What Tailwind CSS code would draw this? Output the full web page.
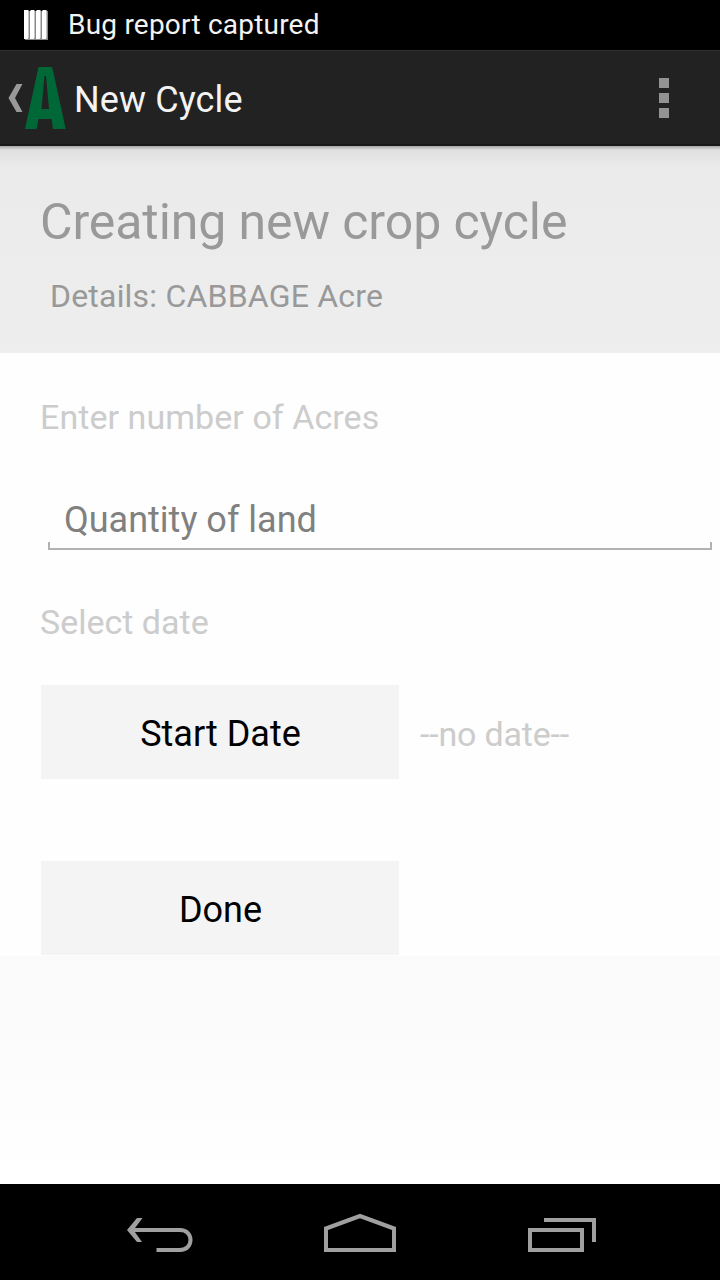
<!DOCTYPE html>
<html lang="en">
<head>
<meta charset="utf-8">
<title>New Cycle</title>
<script src="https://cdn.jsdelivr.net/npm/@tailwindcss/browser@4"></script>
</head>
<body class="flex h-[1280px] w-[720px] flex-col overflow-hidden bg-white font-['Roboto',sans-serif] whitespace-nowrap">
  <div class="flex h-[50px] shrink-0 items-center bg-black pl-6 text-[28px] leading-[50px] tracking-[0.21px] text-[#f3f3f3]">
    <svg class="mr-5 h-[30px] w-6 shrink-0" viewBox="0 0 24 30"><path fill="#8a8a8a" d="M1 1h23v29H1z"/><path fill="#fff" d="M0 0H4.500V28L3.500 29H0zM7 0H10.500V28L9.500 29H6V1zM13 0H16.500V28L15.500 29H12V1zM19 0H22.500V28L21.500 29H18V1z"/></svg>
    <span>Bug report captured</span>
  </div>
  <header class="flex h-24 shrink-0 items-center border-t border-b-2 border-t-[#303030] border-b-[#191919] bg-[#222]">
    <svg class="h-[93px] w-[74px] shrink-0" viewBox="0 51 74 93"><path fill="#999" d="M16.500 84H22.500L15 98l7.500 14H16.500L8.500 98z"/><path fill="#006837" fill-rule="evenodd" d="M38.500 67H52L53.500 73 65.700 129H53L51.500 119H38.500L36.500 129H25zM44.500 76 41.500 109H49L46 76z"/></svg>
    <h1 class="pt-1 text-[36px] leading-[48px] tracking-[0.1px] text-[#f3f3f3]">New Cycle</h1>
    <svg class="mr-[50px] ml-auto h-10 w-[11px]" viewBox="0 0 11 40"><path fill="#939393" d="M0 0H10V10H0zM0 15H10V25H0zM0 30H10V40H0z"/></svg>
  </header>
  <section class="h-[207px] shrink-0 bg-linear-to-b from-[#eaeaea] to-[#eeeeee] text-[#999]">
    <div class="h-5 bg-linear-to-b from-[#a8a8a8] via-[#e0e0e0] via-20% to-[#eaeaea]"></div>
    <h2 class="mt-[26px] pl-10 text-[50px] leading-[60px] tracking-[-0.09px]">Creating new crop cycle</h2>
    <p class="mt-6 pl-[50px] text-[32px] leading-[40px] tracking-[0.2px]">Details: CABBAGE Acre</p>
  </section>
  <main class="flex h-[603px] shrink-0 flex-col bg-[#fefefe]">
    <label class="mt-11 pl-10 text-[34px] leading-[40px] tracking-[0.06px] text-[#ccc]">Enter number of Acres</label>
    <div class="mt-[60px] mr-2 ml-12 flex h-[53px] flex-col">
      <span class="pl-4 text-[36px] leading-[46px] text-[#808080]">Quantity of land</span>
      <div class="-mt-px h-2 shrink-0 border-x-2 border-b-2 border-[#b2b2b2]"></div>
    </div>
    <label class="mt-[52px] pl-10 text-[34px] leading-[40px] text-[#ccc]">Select date</label>
    <div class="mt-[43px] ml-[41px] flex h-[94px] items-center">
      <button class="h-[94px] w-[358px] bg-[#f4f4f4] pt-1 pl-px text-[36px] text-black">Start Date</button>
      <span class="pt-1 pl-[21px] text-[34px] tracking-[-0.18px] text-[#ccc]">--no date--</span>
    </div>
    <button class="mt-[82px] ml-[41px] h-[94px] w-[358px] shrink-0 bg-[#f4f4f4] pt-1 pl-px text-[36px] text-black">Done</button>
  </main>
  <div class="grow bg-linear-to-b from-[#fafafa] to-white"></div>
  <nav class="h-24 shrink-0 bg-black">
    <svg class="h-24 w-[720px]" viewBox="0 1184 720 96" fill="none" stroke="#a0a0a0" stroke-width="4">
      <path d="M131 1230H180C194 1230 194 1250 180 1250H156.500"/><path fill="#a0a0a0" stroke="none" d="M137 1218h5.500L133.500 1230l8.500 12H137L127 1230z"/>
      <path d="M326 1250V1228.500L360 1216l34 12.500V1250z"/>
      <path d="M530 1230h52v20h-52zM544 1220h50v22"/>
    </svg>
  </nav>
</body>
</html>
